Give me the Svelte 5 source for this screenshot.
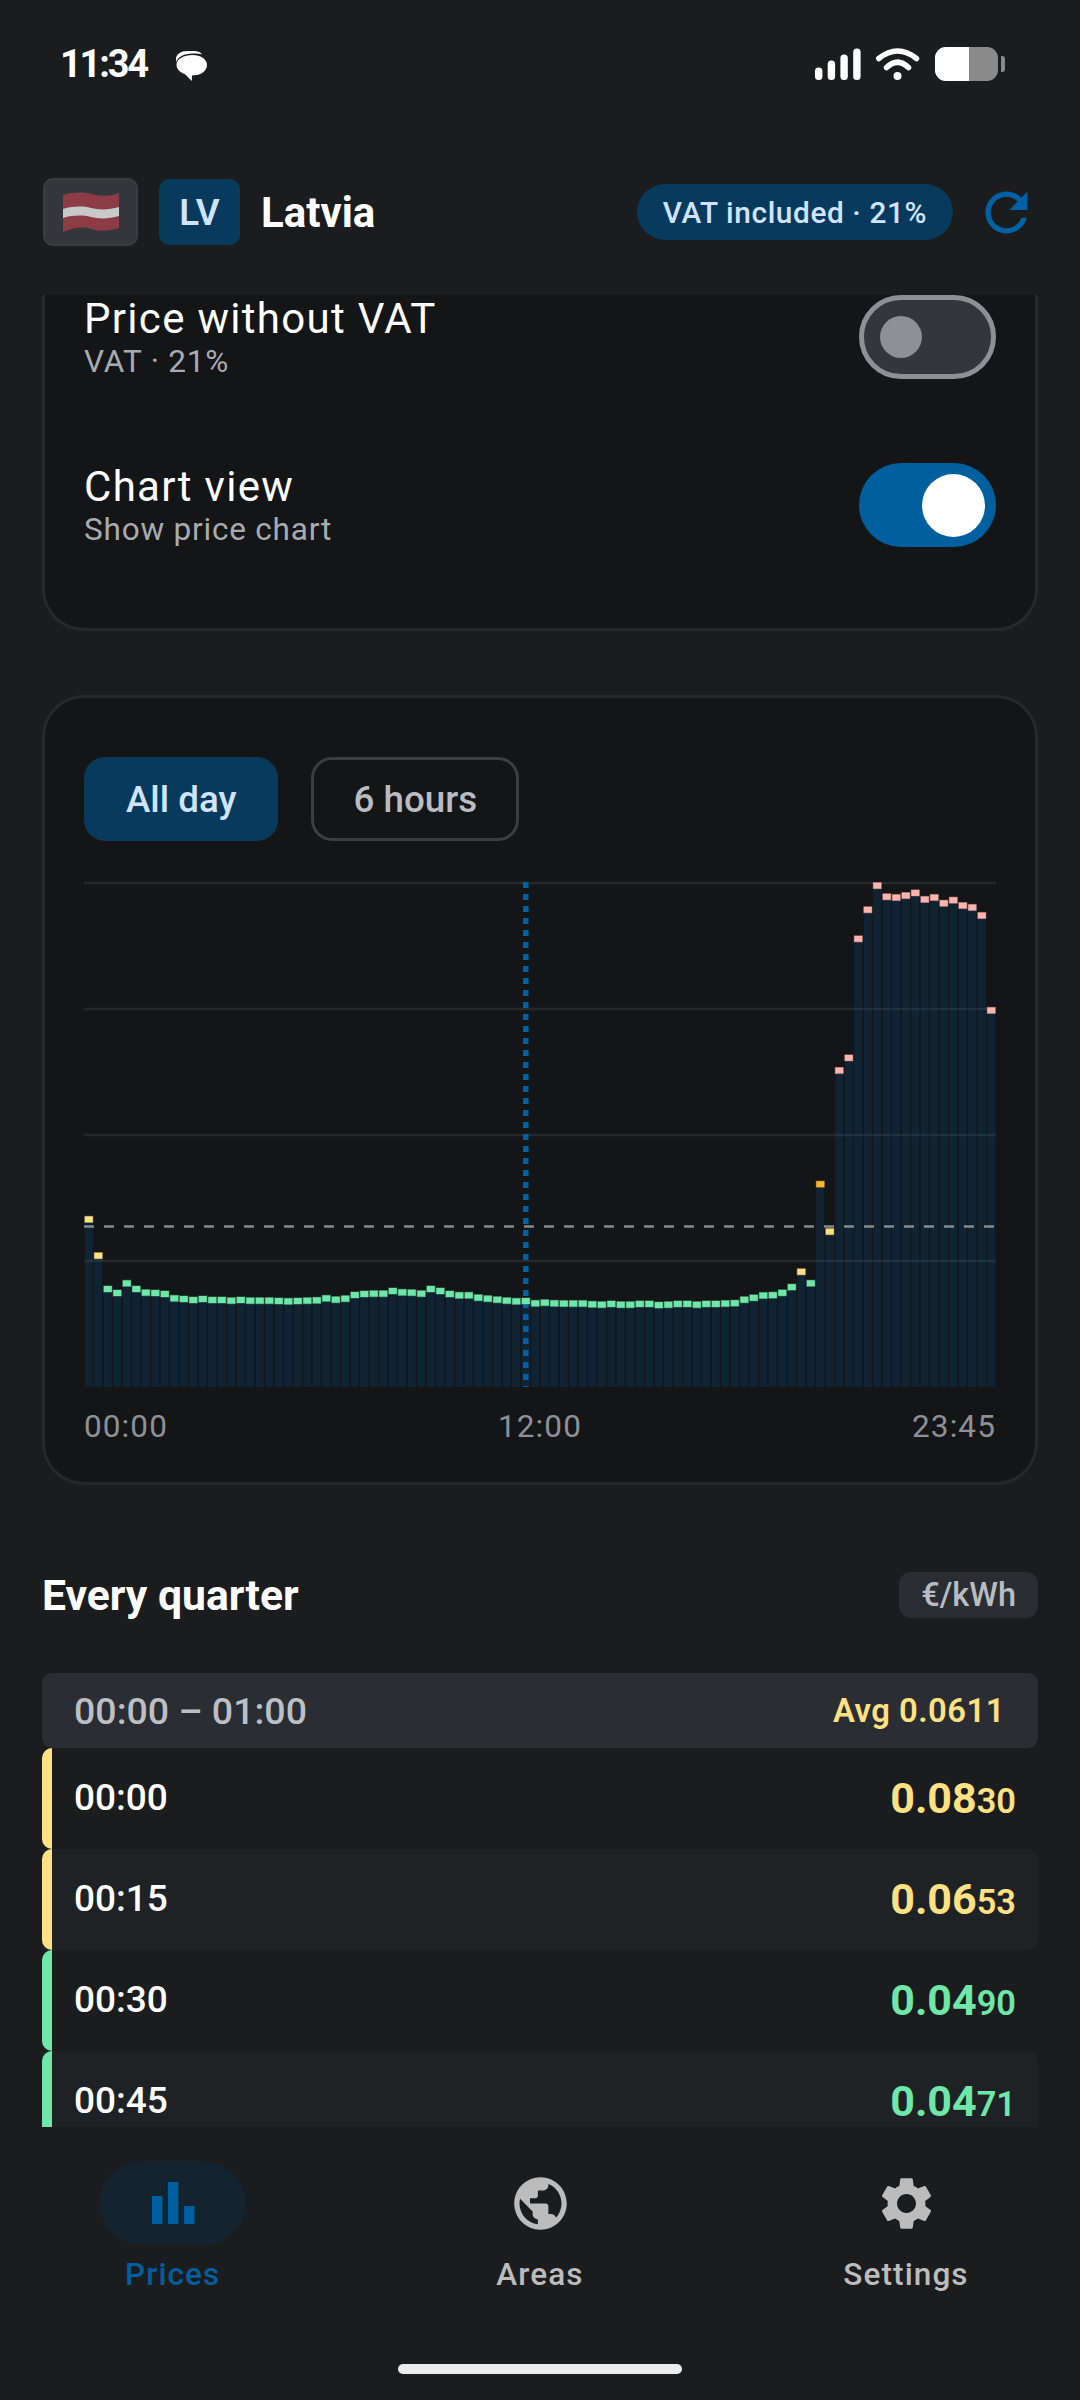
<script>
  const first = [
    208,317,417,429,400,417,428,429,432,445,447,450,447,450,450,452,450,452,452,452,453,454,453,452,451,445,449,446,435,432,431,431,423,427,428,431,417,423,432,436,436,443,446,449,452,454,453,460,458,460
  ];
  const rest = [
    1159,1159,1159,1161,1162,1160,1162,1162,1160,1160,1163,1162,1160,1160,1162,1160,1160,1159,1158,1149,1144,1138,1137,1131,1116,1076,1106,847,971,
    550,517,206,130,67,96,98,93,86,103,98,113,105,119,124,145,393
  ];
  const colourFor = (i) => i < 2 || i === 75 || i === 78 ? 'y' : i === 77 ? 'a' : i >= 79 ? 'p' : 'g';
  const bars = [
    ...first.map((z, i) => ({ i, y: 1150 + z / 3, c: colourFor(i) })),
    ...rest.map((z, k) => ({ i: 50 + k, y: 860 + z / 2.613, c: colourFor(50 + k) }))
  ];
  const fills = { g: '#6ee7a8', y: '#ffe082', a: '#fbb726', p: '#ffb3ad' };
  const grid = [883, 1009, 1135, 1261];
  const rows = [
    { t: '00:00', a: '0.08', b: '30', c: 'yellow', alt: false },
    { t: '00:15', a: '0.06', b: '53', c: 'yellow', alt: true },
    { t: '00:30', a: '0.04', b: '90', c: 'green', alt: false },
    { t: '00:45', a: '0.04', b: '71', c: 'green', alt: true }
  ];
</script>

<div class="phone">
  <div class="status">
    <div class="status-left">
      <span class="clock">11:34</span>
      <svg class="bubble" viewBox="0 0 32 30" width="32" height="30"><path fill="#fff" d="M1 8C1 3 6 0 12 0h7c4 0 7 1.500 8 3.500C25 2.800 22 2.500 18 2.500 9 2.500 2.500 6 1.500 11 1.200 10 1 9 1 8z"/><path fill="#fff" d="M17.500 4C25.500 4 32 8 32 14s-6 10-12.500 10.300L17 24.500 16.800 30 10 23.200C4.800 21.500 1.500 18 1.500 13.500 1.500 8 9 4 17.500 4z"/></svg>
    </div>
    <div class="status-right">
      <svg class="signal" viewBox="0 0 46 32" width="46" height="32"><rect x="0" y="19.500" width="7.400" height="12.500" rx="3.500"/><rect x="12.700" y="12.500" width="7.400" height="19.500" rx="3.500"/><rect x="25.400" y="6.500" width="7.400" height="25.500" rx="3.500"/><rect x="38.200" y="0.500" width="7.400" height="31.500" rx="3.500"/></svg>
      <svg class="wifi" viewBox="0 0 44 32" width="44" height="32"><g fill="none" stroke="#fff" stroke-width="5.500" stroke-linecap="round"><path d="M2.800 10.500Q21.500-4.500 40.500 10.500"/><path d="M10.500 19.500Q21.500 9 32.500 19.500"/></g><circle fill="#fff" cx="21.500" cy="28" r="4"/></svg>
      <div class="battery"><div class="cell"><div class="charge"></div></div><div class="nub"></div></div>
    </div>
  </div>

  <header class="top">
    <div class="flag">
      <svg viewBox="0 0 56 40" width="56" height="40"><path fill="#8b3c46" d="M0 3c10-3 20-3 28-1s18 3 28-1v35c-10 3-20 4-28 1S10 36 0 40z"/><path fill="#c9c9c9" d="M0 17c10-3 20-3 28-1s18 2 28-1v9c-10 3-20 3-28 1s-18-2-28 1z"/></svg>
    </div>
    <div class="code">LV</div>
    <div class="country">Latvia</div>
    <div class="vat">VAT included · 21%</div>
    <svg class="refresh" viewBox="0 0 24 24" width="63" height="63"><path d="M17.65 6.35C16.2 4.9 14.21 4 12 4c-4.420 0-7.990 3.580-7.990 8s3.570 8 7.990 8c3.730 0 6.840-2.550 7.730-6h-2.080c-.820 2.330-3.040 4-5.650 4-3.310 0-6-2.690-6-6s2.690-6 6-6c1.660 0 3.140.690 4.220 1.780L13 11h7V4l-2.350 2.350z"/></svg>
  </header>

  <main class="scroll">
    <div class="inner">
      <section class="card settings">
        <div class="setting first">
          <div><div class="s-title">Price without VAT</div><div class="s-sub">VAT · 21%</div></div>
          <div class="switch off"><span class="knob"></span></div>
        </div>
        <div class="setting second">
          <div><div class="s-title">Chart view</div><div class="s-sub">Show price chart</div></div>
          <div class="switch on"><span class="knob"></span></div>
        </div>
      </section>

      <section class="card chart-card">
        <div class="chips">
          <div class="chip active">All day</div>
          <div class="chip">6 hours</div>
        </div>
        <svg class="chart" viewBox="84 880 912 508" width="912" height="508">
          {#each grid as y}<rect x="84" y={y - 1.300} width="912" height="2.600" fill="#26282b" />{/each}
          {#each bars as b}
            <rect x={84 + b.i * 9.500 + 0.800} y={b.y} width="8" height={1387 - b.y} fill="#0061a4" fill-opacity="0.2" />
          {/each}
          <line x1="84" x2="996" y1="1226.500" y2="1226.500" stroke="#9a9da1" stroke-width="2.600" stroke-dasharray="10 10" opacity="0.85" />
          <line x1="525.800" x2="525.800" y1="882" y2="1387" stroke="#0061a4" stroke-width="5.500" stroke-dasharray="6 6" />
          {#each bars as b}
            <rect x={84 + b.i * 9.500 + 0.200} y={b.y - 3.600} width="9.200" height="7.200" fill={fills[b.c]} fill-opacity="0.35" />
            <rect x={84 + b.i * 9.500 + 0.800} y={b.y - 3} width="8" height="6" fill={fills[b.c]} />
          {/each}
        </svg>
        <div class="axis"><span>00:00</span><span>12:00</span><span>23:45</span></div>
      </section>

      <div class="section-head">
        <h2>Every quarter</h2>
        <div class="unit">€/kWh</div>
      </div>

      <div class="group-head">
        <span class="range">00:00 – 01:00</span>
        <span class="avg">Avg 0.0611</span>
      </div>
      {#each rows as r}
        <div class="row {r.c}" class:alt={r.alt}>
          <span class="time">{r.t}</span>
          <span class="price">{r.a}<small>{r.b}</small></span>
        </div>
      {/each}
    </div>
  </main>

  <nav class="nav">
    <div class="tab active">
      <div class="pill"><svg viewBox="0 0 24 24" width="72" height="72"><path d="M5 9.700h3.500V19H5zM10.300 5h3.500v14h-3.500zM15.700 13h3.500v6h-3.500z"/></svg></div>
      <span>Prices</span>
    </div>
    <div class="tab">
      <div class="pill"><svg viewBox="0 0 24 24" width="63" height="63"><path d="M12 2C6.480 2 2 6.480 2 12s4.480 10 10 10 10-4.480 10-10S17.520 2 12 2zm-1 17.930c-3.950-.490-7-3.850-7-7.930 0-.620.080-1.210.210-1.790L9 15v1c0 1.100.900 2 2 2v1.930zm6.900-2.540c-.260-.810-1-1.390-1.900-1.390h-1v-3c0-.550-.450-1-1-1H8v-2h2c.550 0 1-.450 1-1V7h2c1.100 0 2-.900 2-2v-.410c2.930 1.190 5 4.060 5 7.410 0 2.080-.800 3.970-2.100 5.390z"/></svg></div>
      <span>Areas</span>
    </div>
    <div class="tab">
      <div class="pill"><svg viewBox="0 0 24 24" width="63" height="63"><path d="M19.140 12.940c.040-.300.060-.610.060-.940 0-.320-.020-.640-.070-.940l2.030-1.580c.180-.140.230-.410.120-.610l-1.920-3.320c-.120-.220-.370-.290-.590-.220l-2.390.960c-.500-.380-1.030-.700-1.620-.940l-.360-2.540c-.040-.240-.240-.410-.480-.410h-3.840c-.240 0-.430.170-.470.410l-.360 2.540c-.590.240-1.130.570-1.620.940l-2.390-.960c-.220-.080-.470 0-.590.220L2.740 8.870c-.120.210-.080.470.120.610l2.030 1.580c-.050.300-.090.630-.090.940s.020.640.070.940l-2.030 1.580c-.180.140-.230.410-.120.610l1.920 3.320c.120.220.370.290.590.220l2.390-.960c.500.380 1.030.700 1.620.940l.360 2.540c.050.240.240.410.480.410h3.840c.240 0 .440-.170.470-.410l.360-2.540c.590-.240 1.130-.560 1.620-.940l2.390.960c.22.080.470 0 .590-.22l1.920-3.320c.120-.22.070-.47-.12-.61l-2.010-1.580zM12 15.600c-1.980 0-3.600-1.620-3.600-3.600s1.620-3.600 3.600-3.600 3.600 1.620 3.600 3.600-1.620 3.600-3.600 3.600z"/></svg></div>
      <span>Settings</span>
    </div>
  </nav>
  <div class="home-wrap"><div class="home"></div></div>
</div>

<style>
  :global(body) { margin: 0; background: #1b1c1e; }
  .phone {
    width: 1080px; height: 2400px; overflow: hidden; background: #1b1c1e; color: #fff;
    font-family: Roboto, "Noto Sans", sans-serif; display: flex; flex-direction: column;
  }
  .status { height: 178px; box-sizing: border-box; padding: 47px 75px 0 60px; display: flex; justify-content: space-between; align-items: flex-start; }
  .status-left { display: flex; align-items: center; gap: 28px; }
  .clock { font-size: 38px; font-weight: 700; line-height: 34px; letter-spacing: -2.200px; }
  .bubble { margin-top: 4px; }
  .status-right { display: flex; align-items: center; gap: 15px; height: 34px; }
  .signal { fill: #fff; }
  .battery { display: flex; align-items: center; gap: 3px; }
  .cell { width: 63px; height: 34px; border-radius: 11px; background: #8a8a8a; overflow: hidden; }
  .charge { width: 34px; height: 34px; background: #fff; }
  .nub { width: 4px; height: 16px; background: #8a8a8a; border-radius: 0 3px 3px 0; }

  .top { height: 117px; box-sizing: border-box; padding: 0 42px 0 43px; display: flex; align-items: flex-start; }
  .flag { width: 95px; height: 68px; background: #33363b; border: 2px solid #3a3d42; box-sizing: border-box; border-radius: 10px; display: flex; align-items: center; justify-content: center; }
  .code { width: 81px; height: 66px; margin: 1px 0 0 21px; background: #083a5e; color: #d1e4ff; border-radius: 10px; font-size: 36.750px; font-weight: 600; display: flex; align-items: center; justify-content: center; }
  .country { margin: 0 0 0 21px; font-size: 42px; font-weight: 700; line-height: 70px; flex: 1; }
  .vat { height: 56px; margin-top: 6px; padding: 0 26px; border-radius: 28px; background: #083a5e; color: #d1e4ff; font-size: 29.800px; font-weight: 500; letter-spacing: 0.600px; display: flex; align-items: center; }
  .refresh { fill: #0061a4; margin: 3px 0 0 22px; }

  .scroll { height: 1832px; overflow: hidden; }
  .inner { padding: 0 42px; margin-top: -96px; }
  .card { background: #141517; border: 3px solid #26282b; border-radius: 42px; box-sizing: border-box; }
  .settings { height: 432px; padding: 0 39px; }
  .setting { display: flex; justify-content: space-between; align-items: center; }
  .first { margin-top: 93px; height: 84px; }
  .second { margin-top: 84px; height: 84px; }
  .s-title { font-size: 42px; letter-spacing: 1.300px; line-height: 49px; margin-top: -2px; margin-bottom: 2px; }
  .s-sub { font-size: 31.500px; line-height: 35px; color: #a8abb0; letter-spacing: 0.800px; margin-top: -1px; }
  .switch { width: 137px; height: 84px; border-radius: 42px; box-sizing: border-box; position: relative; flex: none; }
  .switch.off { background: #33363b; border: 5px solid #8d9196; }
  .switch.on { background: #005f9e; }
  .knob { position: absolute; border-radius: 50%; }
  .off .knob { width: 42px; height: 42px; left: 16px; top: 16px; background: #8d9196; }
  .on .knob { width: 63px; height: 63px; left: 63px; top: 11px; background: #fff; }

  .chart-card { height: 790px; margin-top: 64px; padding: 59px 39px 0; }
  .chips { display: flex; gap: 33px; }
  .chip { height: 84px; box-sizing: border-box; padding: 0 39px; border: 3px solid #3b3e43; border-radius: 21px; display: flex; align-items: center; font-size: 36.750px; font-weight: 500; color: #b9bcc1; }
  .chip.active { background: #083a5e; border-color: #083a5e; color: #d1e4ff; padding: 0 39px; }
  .chart { display: block; margin-top: 39px; }
  .axis { display: flex; justify-content: space-between; margin-top: 20px; font-size: 31.500px; color: #8d9196; letter-spacing: 1.100px; line-height: 37px; }

  .section-head { display: flex; justify-content: space-between; align-items: center; height: 46px; margin-top: 87px; }
  h2 { margin: 0; font-size: 42.700px; font-weight: 700; }
  .unit { height: 46px; padding: 0 22px; background: #2a2d32; border-radius: 12px; color: #b9bcc1; font-size: 32.500px; font-weight: 500; display: flex; align-items: center; }

  .group-head { height: 75px; margin-top: 55px; box-sizing: border-box; padding: 0 33px 0 32px; background: #2a2d32; border-radius: 10px; display: flex; justify-content: space-between; align-items: center; }
  .range { font-size: 37.500px; font-weight: 500; color: #bcbfc4; }
  .avg { font-size: 32.800px; font-weight: 600; color: #ffe082; letter-spacing: 0.500px; }

  .row { height: 101px; box-sizing: border-box; padding: 0 22px 2px 32px; display: flex; justify-content: space-between; align-items: center; position: relative; border-radius: 0 10px 10px 0; }
  .row.alt { background: #1e2225; }
  .row::before { content: ""; position: absolute; left: 0; top: 0; bottom: 0; width: 10px; border-radius: 10px 0 0 10px; background: currentColor; }
  .row.yellow { color: #ffe082; }
  .row.green { color: #6ee7a8; }
  .time { font-size: 37px; font-weight: 500; color: #fff; }
  .price { font-size: 43px; font-weight: 700; }
  .price small { font-size: 34.400px; font-weight: 600; }

  .nav { height: 141px; box-sizing: border-box; padding-top: 34px; display: grid; grid-template-columns: 344px 392px 340px; }
  .tab { display: flex; flex-direction: column; align-items: center; color: #bcbcbc; }
  .tab.active { color: #005f9e; }
  .tab:first-child { align-items: flex-start; }
  .tab:first-child .pill { margin-left: 99px; background: #15232f; }
  .tab:first-child span { margin-left: 125px; }
  .pill { width: 147px; height: 84px; border-radius: 42px; display: flex; align-items: center; justify-content: center; }
  .pill svg { fill: currentColor; }
  .tab span { margin-top: 11px; font-size: 31.500px; font-weight: 500; line-height: 37px; letter-spacing: 1.100px; }
  .home-wrap { height: 100px; display: flex; justify-content: center; padding-top: 96px; box-sizing: border-box; }
  .home { width: 284px; height: 10px; border-radius: 5px; background: #ececec; }
</style>
